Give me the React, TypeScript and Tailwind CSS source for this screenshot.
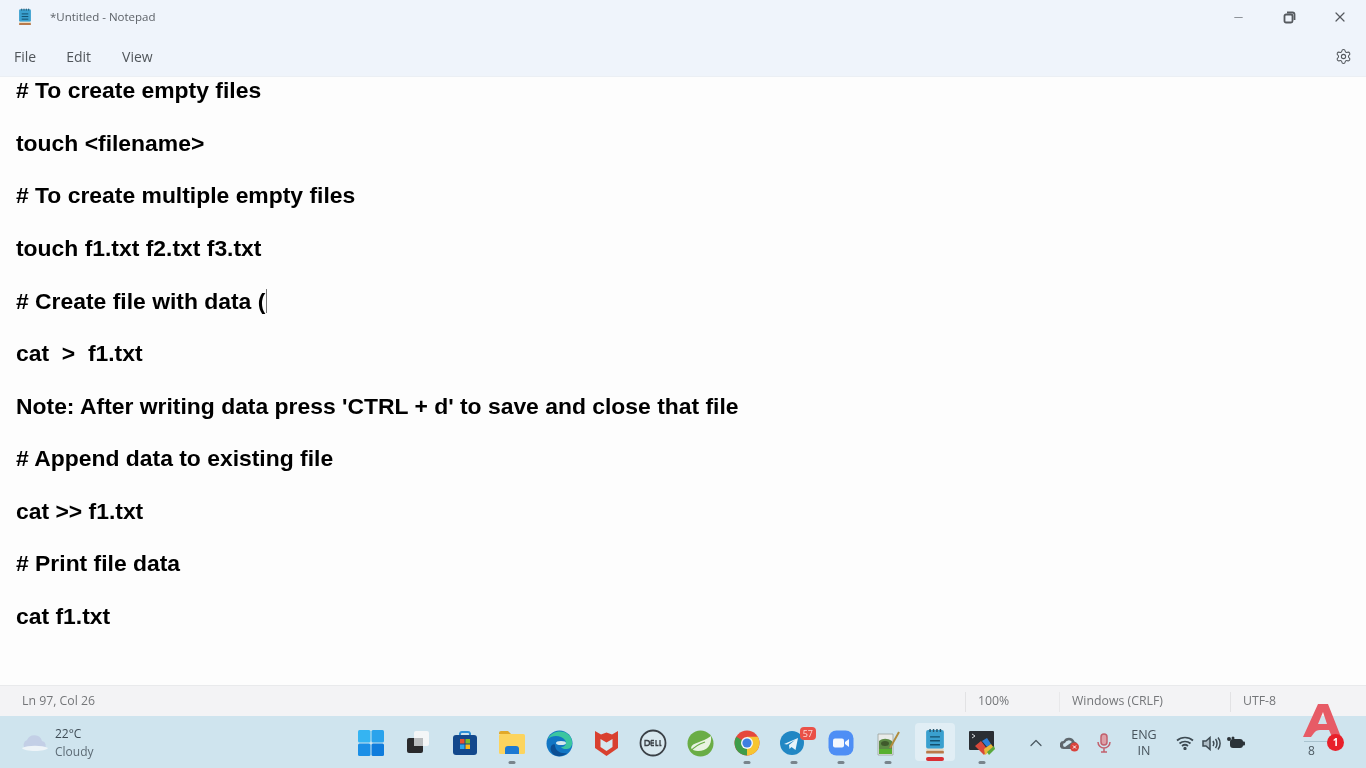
import { Minus, X, Settings, ChevronUp } from 'lucide-react'
import type { ReactNode } from 'react'

const lines = [
  '# To create empty files',
  'touch <filename>',
  '# To create multiple empty files',
  'touch f1.txt f2.txt f3.txt',
  '# Create file with data (',
  'cat  >  f1.txt',
  "Note: After writing data press 'CTRL + d' to save and close that file",
  '# Append data to existing file',
  'cat >> f1.txt',
  '# Print file data',
  'cat f1.txt',
]

function NotepadIcon({ size = 16 }: { size?: number }) {
  return (
    <svg width={size} height={size * 1.15} viewBox="0 0 24 28">
      <rect x="3" y="2" width="18" height="19" rx="2" fill="#3aa0cf" />
      <rect x="3" y="21" width="18" height="2" fill="#eadcc4" />
      <rect x="3" y="23" width="18" height="3" rx="1" fill="#b9794a" />
      <path d="M7 1v3M10.500 1v3M14 1v3M17.500 1v3" stroke="#25566f" strokeWidth="1.500" />
      <path d="M7 9h10M7 13h10M7 17h10" stroke="#13506f" strokeWidth="1.500" />
    </svg>
  )
}

function WinLogo() {
  return (
    <svg width="26" height="26" viewBox="0 0 26 26">
      <rect x="0" y="0" width="12.500" height="12.500" rx="1.500" fill="#35b4f2" />
      <rect x="13.500" y="0" width="12.500" height="12.500" rx="1.500" fill="#2aa3ec" />
      <rect x="0" y="13.500" width="12.500" height="12.500" rx="1.500" fill="#1b8fe6" />
      <rect x="13.500" y="13.500" width="12.500" height="12.500" rx="1.500" fill="#0f7cdc" />
    </svg>
  )
}

function TaskView() {
  return (
    <svg width="26" height="26" viewBox="0 0 26 26">
      <rect x="9" y="1" width="15" height="15" rx="2" fill="#f4f6f7" />
      <rect x="2" y="8" width="16" height="15" rx="2" fill="#2a2a2c" />
      <rect x="9" y="8" width="9" height="8" fill="#b9bcbe" />
    </svg>
  )
}

function Store() {
  return (
    <svg width="26" height="26" viewBox="0 0 26 26">
      <path d="M8 6V3.500A2 2 0 0 1 10 2h6a2 2 0 0 1 2 1.500V6" fill="none" stroke="#2f8fd8" strokeWidth="2" />
      <rect x="1" y="5" width="24" height="20" rx="3" fill="#13488c" />
      <rect x="8" y="9" width="4.500" height="4.500" fill="#e8502f" />
      <rect x="13.500" y="9" width="4.500" height="4.500" fill="#7fba2a" />
      <rect x="8" y="14.500" width="4.500" height="4.500" fill="#2ea4ea" />
      <rect x="13.500" y="14.500" width="4.500" height="4.500" fill="#fbb91a" />
    </svg>
  )
}

function Folder() {
  return (
    <svg width="28" height="26" viewBox="0 0 28 26">
      <path d="M1 3a2 2 0 0 1 2-2h7l3 3H1z" fill="#e2a92a" />
      <rect x="1" y="4" width="26" height="20" rx="1.500" fill="#fcd45e" />
      <path d="M7 24v-5a3 3 0 0 1 3-3h8a3 3 0 0 1 3 3v5z" fill="#1c79d2" />
    </svg>
  )
}

function Edge() {
  return (
    <svg width="27" height="27" viewBox="0 0 27 27">
      <circle cx="13.500" cy="13.500" r="13" fill="#1276c4" />
      <path d="M2 9C5 1 17-1 23 5c4 4 4 11 1 13-3 2-8 1-9-1 5 0 6-4 4-7C15 5 6 5 2 9z" fill="#3bc6a0" />
      <path d="M9 15c0 6 6 9 12 8-4 4-11 4-14 1-3-3-3-7-1-9 1-1 3-1 3 0z" fill="#0c4f94" />
      <ellipse cx="15" cy="13" rx="5" ry="2" fill="#d5e8ef" />
    </svg>
  )
}

function McAfee() {
  return (
    <svg width="25" height="28" viewBox="0 0 25 28">
      <path d="M1 2l6 3.500 5.500-2 5.500 2L24 2v17l-11.500 8L1 19z" fill="#d9402f" />
      <path d="M6.500 10l6 3.500 6-3.500v8l-6 4-6-4z" fill="#d5e7ef" />
    </svg>
  )
}

function Dell() {
  return (
    <svg width="28" height="28" viewBox="0 0 28 28">
      <circle cx="14" cy="14" r="12.500" fill="#d8e8ef" stroke="#3a4046" strokeWidth="1.800" />
      <path d="M6 11.500v5h2a2.500 2.500 0 0 0 0-5zM12 11.500h3M12 14h3M12 16.500h3M12 11.500v5M17 11v5.500h2.500M21 11v5.500h1.500" fill="none" stroke="#3a4046" strokeWidth="1.300" />
    </svg>
  )
}

function Spring() {
  return (
    <svg width="27" height="27" viewBox="0 0 27 27">
      <circle cx="13.500" cy="13.500" r="13" fill="#6aad45" />
      <path d="M24 6c1 9-4 15-13 15-3 0-6-1-7-3 1-6 11-5 20-12z" fill="#e8f3e2" />
      <path d="M4 21c3-4 8-7 14-9" stroke="#6aad45" strokeWidth="1.300" fill="none" />
    </svg>
  )
}

function Chrome() {
  return (
    <svg width="26" height="26" viewBox="0 0 26 26">
      <circle cx="13" cy="13" r="12.500" fill="#e5483c" />
      <path d="M13 13L2.200 6.800A12.500 12.500 0 0 0 13 25.500z" fill="#3f9c4a" />
      <path d="M13 13V25.500A12.500 12.500 0 0 0 23.800 6.800L13 6.800z" fill="#f7c531" />
      <circle cx="13" cy="13" r="6" fill="#f3f6f8" />
      <circle cx="13" cy="13" r="4.600" fill="#3d7fe0" />
    </svg>
  )
}

function Telegram() {
  return (
    <svg width="24" height="24" viewBox="0 0 24 24">
      <circle cx="12" cy="12" r="12" fill="#2187c4" />
      <path d="M4 13l14-6-2.500 12-4-3-2 2-.5-4 6-5-8 4.500z" fill="#e6f3fa" />
    </svg>
  )
}

function Zoom() {
  return (
    <svg width="26" height="26" viewBox="0 0 26 26">
      <rect x="0.500" y="0.500" width="25" height="25" rx="8" fill="#4e8ef5" />
      <rect x="5" y="8.500" width="11" height="9" rx="2" fill="#f3f7fd" />
      <path d="M17 12l4-3v8l-4-3z" fill="#f3f7fd" />
    </svg>
  )
}

function Paint() {
  return (
    <svg width="26" height="26" viewBox="0 0 26 26">
      <path d="M3 4h15v21H3z" fill="#e9ecea" stroke="#9aa19c" strokeWidth="0.800" />
      <path d="M4 11c4-3 8-3 13 0v9H4z" fill="#5d8a45" />
      <path d="M4 19h13v5H4z" fill="#58b030" />
      <ellipse cx="10" cy="13.500" rx="4" ry="2.500" fill="#3f5a2c" />
      <path d="M24 2L15 18" stroke="#b08b3c" strokeWidth="2" />
    </svg>
  )
}

function Terminal() {
  return (
    <svg width="28" height="28" viewBox="0 0 28 28">
      <rect x="1" y="2" width="25" height="19" rx="1" fill="#2a2e33" />
      <path d="M4 5l3 2-3 2" stroke="#d5d9dc" strokeWidth="1" fill="none" />
      <path d="M7 17l6-5 7 9-4 5z" fill="#d9483a" />
      <path d="M14 12l5-3 4 6-4 3z" fill="#2f7fd6" />
      <path d="M16 20l7-5 3 4-9 7z" fill="#e8b83a" />
      <path d="M19 23l7-6 1 3-6 6z" fill="#5aa83c" />
    </svg>
  )
}

function Cloud() {
  return (
    <svg width="28" height="20" viewBox="0 0 28 20">
      <path d="M5 16a5 5 0 0 1 1-9 8 8 0 0 1 15 1 4.500 4.500 0 0 1 2 8z" fill="#c3cfe6" />
      <path d="M1 15c6-3 20-3 26 0-2 4-24 4-26 0z" fill="#eef4f8" />
    </svg>
  )
}

function Dash() {
  return <span className="absolute bottom-[4px] left-1/2 h-[3px] w-[7px] -translate-x-1/2 rounded-full bg-[#78848c]" />
}

const taskbarItems: { icon: ReactNode; dash?: boolean }[] = [
  { icon: <WinLogo /> },
  { icon: <TaskView /> },
  { icon: <Store /> },
  { icon: <Folder />, dash: true },
  { icon: <Edge /> },
  { icon: <McAfee /> },
  { icon: <Dell /> },
  { icon: <Spring /> },
  { icon: <Chrome />, dash: true },
  {
    icon: (
      <div className="relative -ml-[4px]">
        <Telegram />
        <span className="absolute -right-[12px] -top-[4px] rounded-[4px] bg-[#ea5148] px-[3px] text-[9px] leading-[13px] text-[#fbdcd9]">
          57
        </span>
      </div>
    ),
    dash: true,
  },
  { icon: <Zoom />, dash: true },
  { icon: <Paint />, dash: true },
]

export default function App() {
  return (
    <div className="relative flex h-[768px] w-[1366px] flex-col overflow-hidden bg-[#fdfdfd] font-['Open_Sans',sans-serif] blur-[0.4px]">
      <div className="flex h-[77px] flex-col border-b border-[#ebeff4] bg-[#eff4fb] text-[#555b61]">
        <div className="flex h-[36px] items-center pb-[2px] pl-[17px]">
          <NotepadIcon />
          <span className="ml-[17px] text-[11.500px] text-[#5c6167]">*Untitled - Notepad</span>
          <div className="ml-auto flex items-center">
            <div className="flex w-[51px] justify-center">
              <Minus size={13} strokeWidth={1.5} className="text-[#777c81]" />
            </div>
            <div className="flex w-[51px] justify-center">
              <svg width="13" height="13" viewBox="0 0 13 13" fill="none" stroke="#55595e" strokeWidth="1.800">
                <rect x="1.500" y="3.500" width="8" height="8" rx="1.500" />
                <path d="M4 1.500h5.500a2 2 0 0 1 2 2V9" />
              </svg>
            </div>
            <div className="flex w-[51px] justify-center pr-[2px]">
              <X size={16} strokeWidth={1.8} className="text-[#55595e]" />
            </div>
          </div>
        </div>
        <div className="flex h-[40px] items-center text-[14px] text-[#50555a]">
          <span className="ml-[14px]">File</span>
          <span className="ml-[30px]">Edit</span>
          <span className="ml-[31px]">View</span>
          <Settings size={17} strokeWidth={1.5} className="ml-auto mr-[14px] text-[#55595e]" />
        </div>
      </div>

      <div className="h-[608px] pl-[16px] font-['Liberation_Sans',sans-serif] text-[22.900px] font-bold text-black">
        {lines.map((line, i) => (
          <p key={i} className="mb-[26.300px] flex h-[26.300px] items-center whitespace-pre leading-[26px]">
            {line}
            {i === 4 && <span className="ml-[1px] h-[24px] w-[1px] bg-[#777]" />}
          </p>
        ))}
      </div>

      <div className="flex h-[31px] items-center border-t border-[#e9eaec] bg-[#f3f3f5] pt-[1px] text-[12.300px] text-[#747679]">
        <span className="ml-[22px]">Ln 97, Col 26</span>
        <div className="ml-auto flex h-full items-center">
          <span className="h-[20px] w-[1px] bg-[#e2e2e4]" />
          <span className="w-[93px] pl-[12px]">100%</span>
          <span className="h-[20px] w-[1px] bg-[#e8e8ea]" />
          <span className="w-[170px] pl-[12px]">Windows (CRLF)</span>
          <span className="h-[20px] w-[1px] bg-[#e2e2e4]" />
          <span className="w-[135px] pl-[12px]">UTF-8</span>
        </div>
      </div>

      <div className="relative flex h-[52px] items-stretch bg-[#cfe4ee]">
        <div className="flex w-[347.500px] items-center pl-[21px] pt-[2px]">
          <Cloud />
          <div className="ml-[6px] text-[12px] leading-[18px]">
            <div className="text-[#3e4b55]">22°C</div>
            <div className="text-[#5d6b75]">Cloudy</div>
          </div>
        </div>

        {taskbarItems.map((item, i) => (
          <div key={i} className="relative flex w-[47px] items-center justify-center pt-[2px]">
            {item.icon}
            {item.dash && <Dash />}
          </div>
        ))}
        <div className="relative mx-[3.500px] my-[7px] flex w-[40px] items-center justify-center rounded-[4px] bg-[#e1eef5] pb-[1px]">
          <NotepadIcon size={24} />
          <span className="absolute bottom-[0px] left-1/2 h-[4px] w-[18px] -translate-x-1/2 rounded-full bg-[#d92f35]" />
        </div>
        <div className="relative flex w-[47px] items-center justify-center pt-[2px]">
          <Terminal />
          <Dash />
        </div>

        <div className="ml-[13.500px] flex items-center pt-[2px] text-[#4d5a63]">
          <div className="flex w-[34px] justify-center">
            <ChevronUp size={20} strokeWidth={1.5} />
          </div>
          <div className="flex w-[34px] justify-center">
            <svg width="20" height="17" viewBox="0 0 20 17">
              <path d="M4 14a4 4 0 0 1-.5-8 6 6 0 0 1 11 .5A4 4 0 0 1 15 14z" fill="#5f676d" />
              <path d="M5 12a2 2 0 0 1 0-4 4 4 0 0 1 7-1" fill="#cfe4ee" />
              <circle cx="14.500" cy="12" r="4.500" fill="#d9423c" />
              <path d="M13 10.500l3 3M16 10.500l-3 3" stroke="#fff" strokeWidth="1" />
            </svg>
          </div>
          <div className="flex w-[34px] justify-center">
            <svg width="14" height="20" viewBox="0 0 14 20" fill="none">
              <rect x="4" y="1" width="6" height="11" rx="3" fill="#dda0a8" stroke="#c2606d" strokeWidth="1.500" />
              <path d="M1 9a6 6 0 0 0 12 0M7 15v4M4 19h6" stroke="#c2606d" strokeWidth="1.500" />
            </svg>
          </div>
          <div className="w-[46px] text-center text-[12.500px] leading-[16px] text-[#47535c]">
            <div>ENG</div>
            <div>IN</div>
          </div>
          <div className="ml-[5px] flex w-[26px] justify-center">
            <svg width="18" height="14" viewBox="0 0 18 14" fill="none" stroke="#3d4a52" strokeWidth="1.700">
              <path d="M1 4.500c4.500-4 11.500-4 16 0M3.500 7.500c3-2.700 8-2.700 11 0M6 10c1.800-1.500 4.200-1.500 6 0" />
              <circle cx="9" cy="12.500" r="0.800" fill="#3d4a52" />
            </svg>
          </div>
          <div className="flex w-[26px] justify-center">
            <svg width="19" height="15" viewBox="0 0 19 15" fill="none" stroke="#3d4a52" strokeWidth="1.500">
              <path d="M1 5v5h3l4 3.500v-12L4 5z" fill="#aebdc6" />
              <path d="M11 5c1 1.500 1 3.500 0 5M13.500 3c2 2.500 2 6.500 0 9M16 1.500c2.800 3.500 2.800 8.500 0 12" />
            </svg>
          </div>
          <div className="flex w-[24px] justify-center">
            <svg width="20" height="14" viewBox="0 0 20 14">
              <rect x="4" y="3" width="13" height="9" rx="3" fill="#2c3338" />
              <rect x="16" y="5.500" width="3" height="4" rx="1" fill="#2c3338" />
              <circle cx="3" cy="3" r="2" fill="#2c3338" />
              <circle cx="7" cy="2" r="1.500" fill="#2c3338" />
            </svg>
          </div>
        </div>
      </div>

      {/* red logo lies over the status bar and the taskbar */}
      <div className="absolute left-[1303px] top-[703px]">
        <svg width="38" height="36" viewBox="0 0 38 36">
          <path fillRule="evenodd" d="M15 1h10l13 33h-9l-3-7h-9q-4 0-6 3l-3 4H0zM20 9l-5 12h9z" fill="#e75b66" />
        </svg>
      </div>
      <div className="absolute left-[1304px] top-[741px] h-[1px] w-[36px] bg-[#a9c3cf]" />
      <span className="absolute left-[1308px] top-[743px] text-[12px] leading-[16px] text-[#4d5a63]">8</span>
      <div className="absolute left-[1327px] top-[734px] flex h-[17px] w-[17px] items-center justify-center rounded-full bg-[#e8202a] text-[10px] font-bold text-white">
        1
      </div>
    </div>
  )
}
